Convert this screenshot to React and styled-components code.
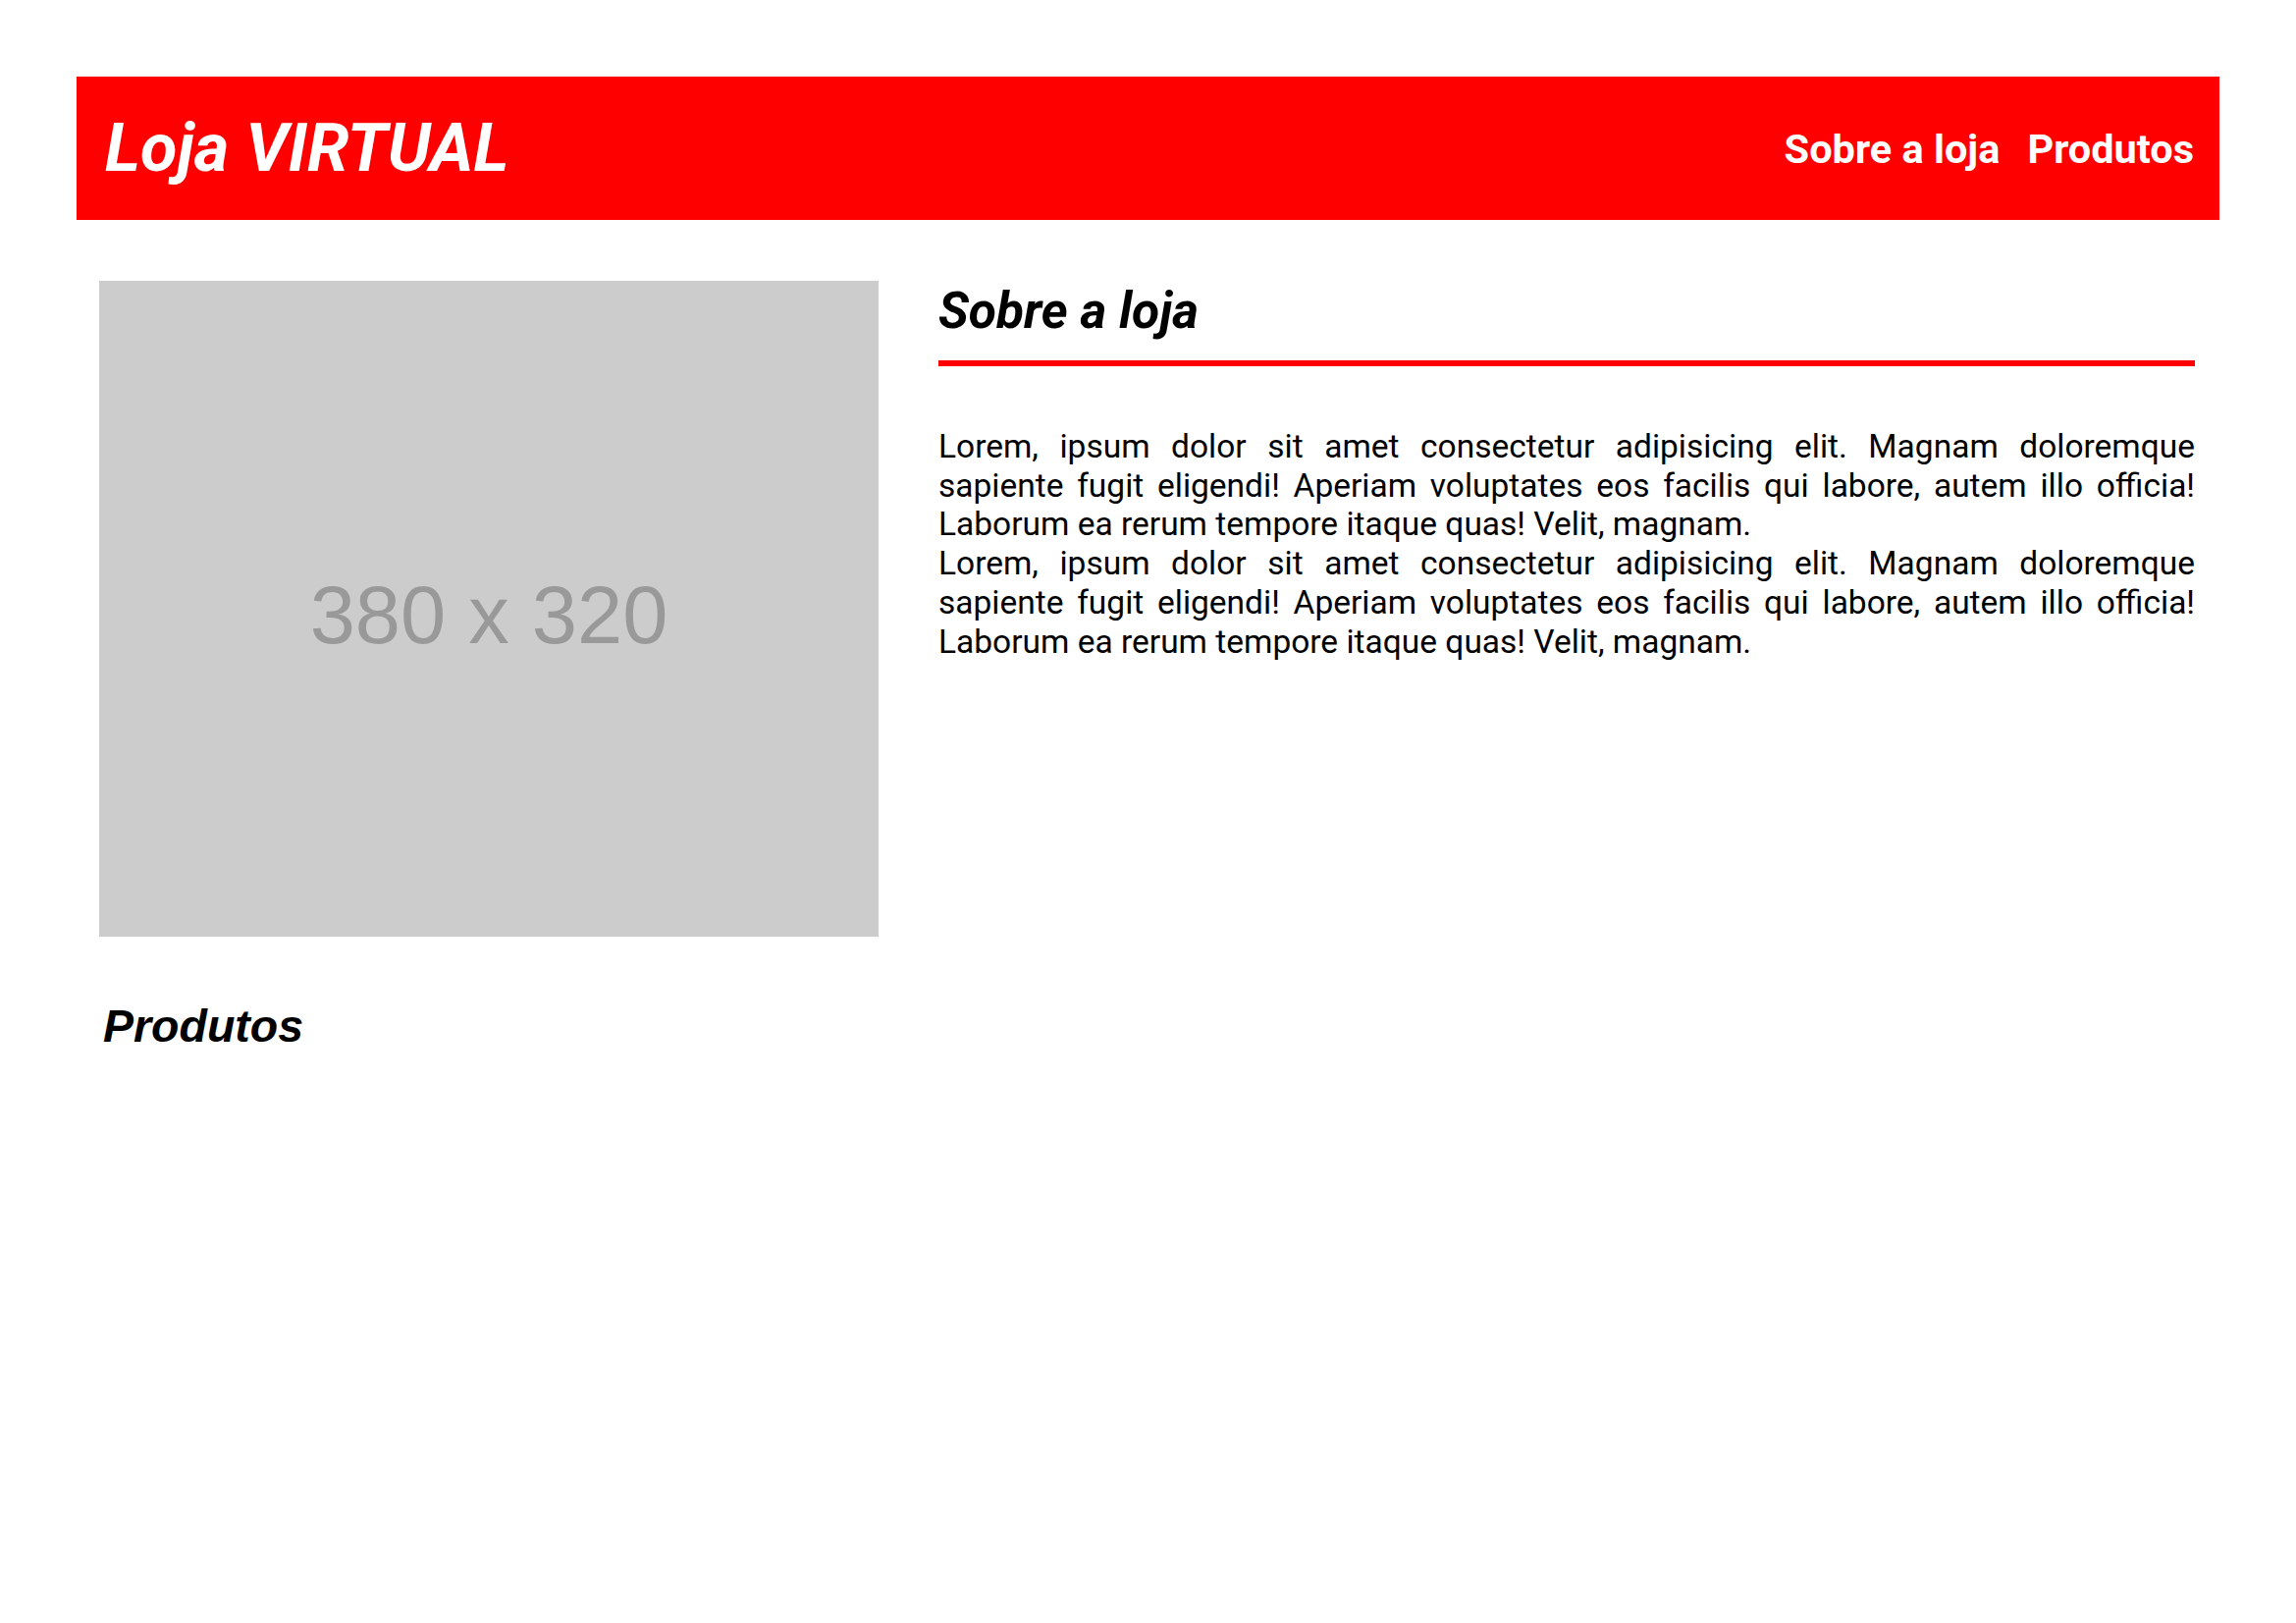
import styled, { createGlobalStyle } from 'styled-components'

const GlobalStyle = createGlobalStyle`
    html, body {
        margin: 0;
        padding: 0;
        background: #ffffff;
    }

    body {
        font-family: Roboto, 'Noto Sans', sans-serif;
        color: #000000;
    }
`

const Page = styled.div`
    padding: 78px;
`

const Header = styled.header`
    height: 146px;
    display: flex;
    flex-direction: row;
    align-items: center;
    justify-content: space-between;
    padding: 0 26px 0 29px;
    box-sizing: border-box;
    background: #ff0000;
    color: #ffffff;
`

const Logo = styled.h1`
    margin: 0;
    font-size: 68.5px;
    font-weight: 700;
    font-style: italic;
    line-height: 1;
`

const Nav = styled.nav`
    display: flex;
    flex-direction: row;
    align-items: center;
    gap: 28px;
`

const NavLink = styled.a`
    color: inherit;
    text-decoration: none;
    font-size: 41.5px;
    font-weight: 700;
`

const Main = styled.main`
    padding: 62px 25px 0 23px;
`

const AboutRow = styled.section`
    display: grid;
    grid-template-columns: 794px 1fr;
    column-gap: 61px;
    align-items: start;
`

const Placeholder = styled.div`
    width: 794px;
    height: 668px;
    padding-top: 14px;
    box-sizing: border-box;
    display: flex;
    align-items: center;
    justify-content: center;
    background: #cccccc;
    color: #999999;
    font-family: 'Liberation Sans', Arial, sans-serif;
    font-size: 83px;
`

const AboutText = styled.div`
    display: flex;
    flex-direction: column;
`

const SectionTitle = styled.h2`
    margin: 0;
    font-size: 51.5px;
    font-weight: 700;
    font-style: italic;
    padding-bottom: ${({ $underline }) => ($underline ? '20px' : '0')};
    border-bottom: ${({ $underline }) => ($underline ? '6px solid #ff0000' : 'none')};
`

const Paragraphs = styled.div`
    margin-top: 62px;
`

const Paragraph = styled.p`
    margin: 0;
    font-size: 33.5px;
    line-height: 39.7px;
    text-align: justify;
`

const ProductsTitle = styled(SectionTitle)`
    margin: 64px 0 0 4px;
    font-family: 'Liberation Sans', Arial, sans-serif;
    font-size: 46.5px;
`

const lorem =
    'Lorem, ipsum dolor sit amet consectetur adipisicing elit. Magnam doloremque sapiente fugit eligendi! Aperiam voluptates eos facilis qui labore, autem illo officia! Laborum ea rerum tempore itaque quas! Velit, magnam.'

export default function App() {
    return (
        <>
            <GlobalStyle />
            <Page>
                <Header>
                    <Logo>Loja VIRTUAL</Logo>
                    <Nav>
                        <NavLink href='#sobre'>Sobre a loja</NavLink>
                        <NavLink href='#produtos'>Produtos</NavLink>
                    </Nav>
                </Header>
                <Main>
                    <AboutRow id='sobre'>
                        <Placeholder>380 x 320</Placeholder>
                        <AboutText>
                            <SectionTitle $underline>Sobre a loja</SectionTitle>
                            <Paragraphs>
                                <Paragraph>{lorem}</Paragraph>
                                <Paragraph>{lorem}</Paragraph>
                            </Paragraphs>
                        </AboutText>
                    </AboutRow>
                    <ProductsTitle id='produtos'>Produtos</ProductsTitle>
                </Main>
            </Page>
        </>
    )
}
